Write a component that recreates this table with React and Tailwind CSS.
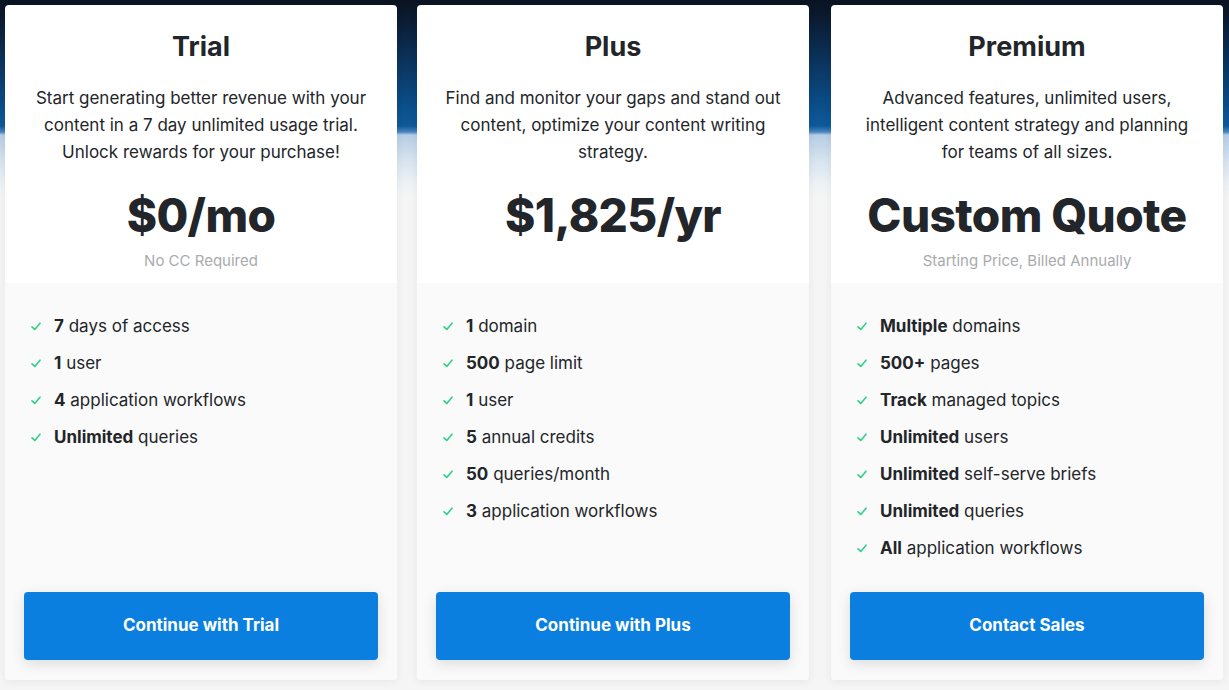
const plans = [
  {
    name: "Trial",
    desc: "Start generating better revenue with your content in a 7 day unlimited usage trial. Unlock rewards for your purchase!",
    price: "$0/mo",
    note: "No CC Required",
    features: [
      ["7", " days of access"],
      ["1", " user"],
      ["4", " application workflows"],
      ["Unlimited", " queries"],
    ],
    cta: "Continue with Trial",
  },
  {
    name: "Plus",
    desc: "Find and monitor your gaps and stand out content, optimize your content writing strategy.",
    price: "$1,825/yr",
    note: "",
    features: [
      ["1", " domain"],
      ["500", " page limit"],
      ["1", " user"],
      ["5", " annual credits"],
      ["50", " queries/month"],
      ["3", " application workflows"],
    ],
    cta: "Continue with Plus",
  },
  {
    name: "Premium",
    desc: "Advanced features, unlimited users, intelligent content strategy and planning for teams of all sizes.",
    price: "Custom Quote",
    note: "Starting Price, Billed Annually",
    features: [
      ["Multiple", " domains"],
      ["500+", " pages"],
      ["Track", " managed topics"],
      ["Unlimited", " users"],
      ["Unlimited", " self-serve briefs"],
      ["Unlimited", " queries"],
      ["All", " application workflows"],
    ],
    cta: "Contact Sales",
  },
];

const Check = () => (
  <svg width="10" height="9" viewBox="0 0 10 9" fill="none" className="shrink-0">
    <path d="M1 4.8 L3.8 7.4 L9 1.2" stroke="#2fd08a" strokeWidth="1.6" strokeLinecap="round" strokeLinejoin="round" />
  </svg>
);

const PlanCard = ({ plan }) => (
  <div className="w-[392px] shrink-0 h-[675px] bg-white rounded shadow-[0_2px_8px_rgba(0,0,0,0.06)] flex flex-col overflow-hidden">
    <div className="h-[278px] shrink-0 px-6 pt-6 text-center">
      <h2 className="text-[27px] leading-[36px] font-bold text-[#222529]">{plan.name}</h2>
      <p className="mt-[20px] text-[17px] leading-[27px] text-[#222529] px-1">{plan.desc}</p>
      <div className="mt-[21px] text-[46px] leading-[56px] font-extrabold tracking-[-0.6px] text-[#222529]">{plan.price}</div>
      {plan.note && <div className="mt-[7px] text-[15px] leading-[22px] text-[#a9abad]">{plan.note}</div>}
    </div>
    <div className="flex-1 bg-[#fafafa] flex flex-col px-[19px] pb-5 pt-[25px]">
      <ul className="px-[7px]">
        {plan.features.map(([b, rest], i) => (
          <li key={i} className="flex items-center gap-[13px] h-[37px] text-[17px] text-[#222529]">
            <Check />
            <span>
              <span className="font-bold">{b}</span>
              {rest}
            </span>
          </li>
        ))}
      </ul>
      <button className="mt-auto h-[68px] w-full rounded bg-[#0a7fe0] text-white text-[17px] font-bold shadow-[0_4px_14px_rgba(0,0,0,0.12)]">
        {plan.cta}
      </button>
    </div>
  </div>
);

export default function App() {
  return (
    <div
      className="w-full h-[690px] overflow-hidden flex gap-5 px-[5px] pt-[5px] bg-[linear-gradient(to_bottom,#0a1220_0px,#0b2747_40px,#0b4a84_100px,#0e5a9a_126px,#4a86c2_132px,#b6cde4_135px,#d6e3ef_160px,#eef2f5_185px,#f5f5f5_200px,#f5f5f5_100%)]"
      style={{ fontFamily: "Inter, 'Noto Sans', sans-serif" }}
    >
      {plans.map((p, i) => (
        <div key={p.name} className={i === 2 ? "ml-[2px]" : ""}>
          <PlanCard plan={p} />
        </div>
      ))}
    </div>
  );
}
